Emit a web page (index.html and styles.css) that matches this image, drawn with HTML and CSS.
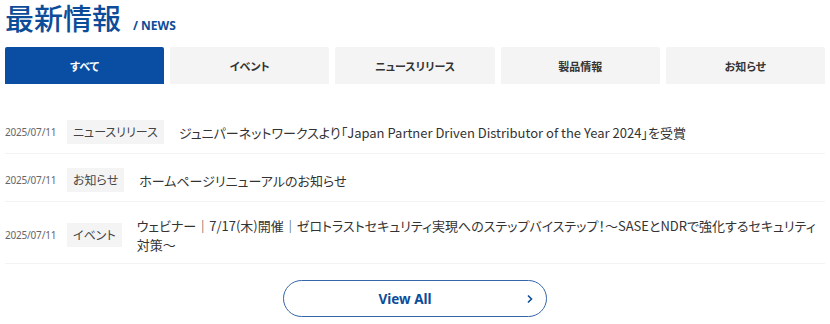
FILE: index.html
```html
<!DOCTYPE html>
<html lang="ja">
<head>
    <meta charset="UTF-8">
    <title>最新情報</title>
    <link rel="stylesheet" href="styles.css">
</head>
<body>
    <section class="news">
        <div class="news-head">
            <h1>最新情報</h1>
            <span class="news-sub">/ NEWS</span>
        </div>

        <ul class="tabs">
            <li class="tab active">すべて</li>
            <li class="tab">イベント</li>
            <li class="tab">ニュースリリース</li>
            <li class="tab">製品情報</li>
            <li class="tab">お知らせ</li>
        </ul>

        <ul class="news-list">
            <li class="news-item">
                <span class="date">2025/07/11</span>
                <span class="tag">ニュースリリース</span>
                <a class="title" href="#">ジュニパーネットワークスより「Japan Partner Driven Distributor of the Year 2024」を受賞</a>
            </li>
            <li class="news-item">
                <span class="date">2025/07/11</span>
                <span class="tag">お知らせ</span>
                <a class="title" href="#">ホームページリニューアルのお知らせ</a>
            </li>
            <li class="news-item">
                <span class="date">2025/07/11</span>
                <span class="tag">イベント</span>
                <a class="title" href="#">ウェビナー｜7/17(木)開催｜ゼロトラストセキュリティ実現へのステップバイステップ！～SASEとNDRで強化するセキュリティ対策～</a>
            </li>
        </ul>

        <div class="more">
            <a class="more-btn" href="#">
                View All
                <svg class="chev" width="8" height="10" viewBox="0 0 8 10"><path d="M2 1.5 L5.5 5 L2 8.5" fill="none" stroke="currentColor" stroke-width="1.6"/></svg>
            </a>
        </div>
    </section>
</body>
</html>
```

FILE: styles.css
```css
body {
    margin: 0;
    padding: 0 5px;
    background: #fff;
    font-family: "Noto Sans CJK JP", "Noto Sans", sans-serif;
    color: #333;
}

ul {
    list-style: none;
    margin: 0;
    padding: 0;
}

a {
    color: inherit;
    text-decoration: none;
}

.news {
    width: 820px;
}

.news-head {
    display: flex;
    align-items: baseline;
    gap: 12px;
    height: 40px;
}

.news-head h1 {
    margin: 0;
    font-size: 29px;
    line-height: 34px;
    font-weight: 500;
    color: #0d4c98;
}

.news-sub {
    font-family: "Noto Sans", sans-serif;
    font-size: 12px;
    font-weight: 700;
    color: #0d4c98;
}

.tabs {
    display: flex;
    gap: 6px;
    margin-top: 7px;
}

.tab {
    flex: 1;
    height: 37px;
    display: flex;
    align-items: center;
    justify-content: center;
    background: #f4f4f4;
    border-radius: 2px 2px 0 0;
    font-size: 11px;
    font-weight: 700;
    color: #333;
    font-feature-settings: "palt";
}

.tab.active {
    background: #0a4ea3;
    color: #fff;
}

.news-list {
    margin-top: 22px;
}

.news-item {
    display: flex;
    align-items: center;
    padding: 14px 0 9px;
    border-bottom: 1px solid #f3f3f3;
}

.date {
    flex: none;
    width: 62px;
    font-family: "Noto Sans", sans-serif;
    font-size: 10px;
    letter-spacing: -0.2px;
    color: #666;
}

.tag {
    flex: none;
    height: 24px;
    line-height: 24px;
    padding: 0 6px;
    margin-right: 15px;
    background: #f4f4f4;
    font-size: 12px;
    color: #444;
    font-feature-settings: "palt";
}

.title {
    font-size: 13px;
    line-height: 19px;
    color: #333;
    font-feature-settings: "palt";
}

.more {
    display: flex;
    justify-content: center;
    margin-top: 16px;
}

.more-btn {
    position: relative;
    width: 262px;
    height: 35px;
    display: flex;
    align-items: center;
    justify-content: center;
    border: 1.5px solid #3566a8;
    border-radius: 20px;
    font-family: "Noto Sans", sans-serif;
    font-size: 13.5px;
    font-weight: 700;
    color: #0d4c98;
    text-indent: -20px;
}

.chev {
    position: absolute;
    right: 12px;
    top: 13px;
}
```
